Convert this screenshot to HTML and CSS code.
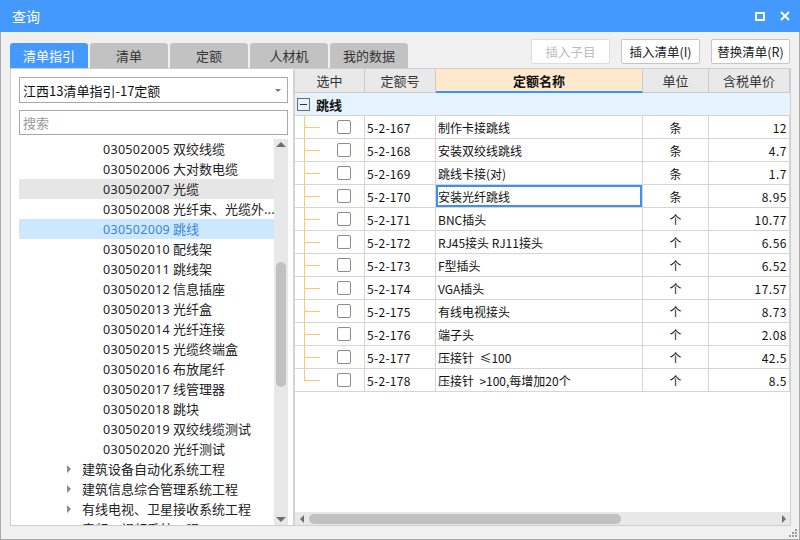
FILE: index.html
```html
<!DOCTYPE html>
<html lang="zh">
<head>
<meta charset="utf-8">
<title>查询</title>
<link rel="stylesheet" href="styles.css">
</head>
<body>
<div class="window">
  <header class="titlebar">
    <span class="title">查询</span>
    <span class="wctl">
      <svg class="ico-max" width="10" height="9" viewBox="0 0 10 9"><rect x="1" y="1" width="8" height="7" fill="none" stroke="#fff" stroke-width="2"/></svg>
      <svg class="ico-close" width="10" height="10" viewBox="0 0 10 10"><path d="M1 1L9 9M9 1L1 9" stroke="#fff" stroke-width="2"/></svg>
    </span>
  </header>
  <div class="content">
    <div class="toolbar">
      <nav class="tabs">
        <span class="tab active">清单指引</span>
        <span class="tab">清单</span>
        <span class="tab">定额</span>
        <span class="tab">人材机</span>
        <span class="tab">我的数据</span>
      </nav>
      <div class="btns">
        <button class="btn disabled">插入子目</button>
        <button class="btn">插入清单(I)</button>
        <button class="btn">替换清单(R)</button>
      </div>
    </div>
    <div class="main">
      <section class="left">
        <div class="select"><span>江西13清单指引-17定额</span><i class="caret"></i></div>
        <div class="search">搜索</div>
        <div class="treewrap">
          <ul class="tree">
            <li class="leaf"><span class="code">030502005</span>双绞线缆</li>
            <li class="leaf"><span class="code">030502006</span>大对数电缆</li>
            <li class="leaf hover"><span class="code">030502007</span>光缆</li>
            <li class="leaf"><span class="code">030502008</span>光纤束、光缆外...</li>
            <li class="leaf sel"><span class="code">030502009</span>跳线</li>
            <li class="leaf"><span class="code">030502010</span>配线架</li>
            <li class="leaf"><span class="code">030502011</span>跳线架</li>
            <li class="leaf"><span class="code">030502012</span>信息插座</li>
            <li class="leaf"><span class="code">030502013</span>光纤盒</li>
            <li class="leaf"><span class="code">030502014</span>光纤连接</li>
            <li class="leaf"><span class="code">030502015</span>光缆终端盒</li>
            <li class="leaf"><span class="code">030502016</span>布放尾纤</li>
            <li class="leaf"><span class="code">030502017</span>线管理器</li>
            <li class="leaf"><span class="code">030502018</span>跳块</li>
            <li class="leaf"><span class="code">030502019</span>双绞线缆测试</li>
            <li class="leaf"><span class="code">030502020</span>光纤测试</li>
            <li class="node"><i class="tri"></i>建筑设备自动化系统工程</li>
            <li class="node"><i class="tri"></i>建筑信息综合管理系统工程</li>
            <li class="node"><i class="tri"></i>有线电视、卫星接收系统工程</li>
            <li class="node"><i class="tri"></i>音频、视频系统工程</li>
          </ul>
          <div class="vscroll">
            <i class="arr-up"></i>
            <div class="vthumb"></div>
            <div class="vfill"></div>
            <i class="arr-down"></i>
          </div>
        </div>
      </section>
      <section class="right">
        <div class="grid">
          <div class="hc">选中</div>
          <div class="hc">定额号</div>
          <div class="hc hot">定额名称</div>
          <div class="hc">单位</div>
          <div class="hc">含税单价</div>

          <div class="group"><i class="minus"></i><b>跳线</b></div>

          <div class="c tree-c"><i class="chk"></i></div><div class="c code">5-2-167</div><div class="c name">制作卡接跳线</div><div class="c unit">条</div><div class="c price">12</div>
          <div class="c tree-c"><i class="chk"></i></div><div class="c code">5-2-168</div><div class="c name">安装双绞线跳线</div><div class="c unit">条</div><div class="c price">4.7</div>
          <div class="c tree-c"><i class="chk"></i></div><div class="c code">5-2-169</div><div class="c name">跳线卡接(对)</div><div class="c unit">条</div><div class="c price">1.7</div>
          <div class="c tree-c"><i class="chk"></i></div><div class="c code">5-2-170</div><div class="c name focus">安装光纤跳线</div><div class="c unit">条</div><div class="c price">8.95</div>
          <div class="c tree-c"><i class="chk"></i></div><div class="c code">5-2-171</div><div class="c name">BNC插头</div><div class="c unit">个</div><div class="c price">10.77</div>
          <div class="c tree-c"><i class="chk"></i></div><div class="c code">5-2-172</div><div class="c name">RJ45接头 RJ11接头</div><div class="c unit">个</div><div class="c price">6.56</div>
          <div class="c tree-c"><i class="chk"></i></div><div class="c code">5-2-173</div><div class="c name">F型插头</div><div class="c unit">个</div><div class="c price">6.52</div>
          <div class="c tree-c"><i class="chk"></i></div><div class="c code">5-2-174</div><div class="c name">VGA插头</div><div class="c unit">个</div><div class="c price">17.57</div>
          <div class="c tree-c"><i class="chk"></i></div><div class="c code">5-2-175</div><div class="c name">有线电视接头</div><div class="c unit">个</div><div class="c price">8.73</div>
          <div class="c tree-c"><i class="chk"></i></div><div class="c code">5-2-176</div><div class="c name">端子头</div><div class="c unit">个</div><div class="c price">2.08</div>
          <div class="c tree-c"><i class="chk"></i></div><div class="c code">5-2-177</div><div class="c name">压接针&nbsp; ≤100</div><div class="c unit">个</div><div class="c price">42.5</div>
          <div class="c tree-c last"><i class="chk"></i></div><div class="c code">5-2-178</div><div class="c name">压接针&nbsp; &gt;100,每增加20个</div><div class="c unit">个</div><div class="c price">8.5</div>
        </div>
        <div class="blank"></div>
        <div class="hscroll">
          <i class="arr-left"></i>
          <div class="hthumb"></div>
          <div class="hfill"></div>
          <i class="arr-right"></i>
        </div>
      </section>
    </div>
    <div class="statusbar">
      <svg class="grip" width="8" height="8" viewBox="0 0 8 8" fill="#9a9a9a"><rect x="6" y="0" width="2" height="2"/><rect x="3" y="3" width="2" height="2"/><rect x="6" y="3" width="2" height="2"/><rect x="0" y="6" width="2" height="2"/><rect x="3" y="6" width="2" height="2"/><rect x="6" y="6" width="2" height="2"/></svg>
    </div>
  </div>
</div>
</body>
</html>
```

FILE: styles.css
```css
* { box-sizing: border-box; margin: 0; padding: 0; }
html, body { width: 800px; height: 540px; overflow: hidden; }
body {
  font-family: "Noto Sans CJK SC", "Noto Sans", sans-serif;
  font-size: 13px;
  color: #222;
  background: #f0f0f0;
}
.window {
  width: 800px;
  height: 540px;
  display: flex;
  flex-direction: column;
  border: 1px solid #a8a8a8;
  border-top: none;
  background: #f0f0f0;
}
.titlebar {
  height: 32px;
  margin: 0 -1px;
  background: #4499ff;
  color: #fff;
  display: flex;
  align-items: center;
  justify-content: space-between;
  padding: 0 10px 0 12px;
}
.title { font-size: 14px; }
.wctl { display: flex; align-items: center; gap: 15px; }
.ico-max { margin-top: 1px; }

.content {
  flex: 1;
  display: flex;
  flex-direction: column;
  padding: 0 9px;
}
.toolbar {
  height: 36px;
  display: flex;
  justify-content: space-between;
}
.tabs { display: flex; gap: 2px; align-self: flex-end; }
.tab {
  width: 78px;
  height: 25px;
  background: #c2c2c2;
  color: #333;
  border-radius: 3px 3px 0 0;
  display: flex;
  align-items: center;
  justify-content: center;
  font-size: 13px;
}
.tab.active { background: #4499ff; color: #fff; }
.btns { display: flex; gap: 11px; padding-top: 7px; }
.btn {
  width: 79px;
  height: 25px;
  background: #fff;
  border: 1px solid #c6c6c6;
  border-radius: 2px;
  font-family: inherit;
  font-size: 12.5px;
  color: #222;
}
.btn.disabled { color: #bdbdbd; border-color: #dcdcdc; }

.main { height: 458px; display: flex; }
.left {
  width: 283px;
  background: #fff;
  border: 1px solid #cfcfcf;
  border-right: none;
  padding: 8px 5px 0 8px;
  display: flex;
  flex-direction: column;
}
.select {
  height: 26px;
  border: 1px solid #a9a9a9;
  display: flex;
  align-items: center;
  justify-content: space-between;
  padding: 0 6px 0 3px;
  color: #111;
}
.caret {
  width: 0; height: 0;
  border-left: 3px solid transparent;
  border-right: 3px solid transparent;
  border-top: 3px solid #777;
}
.search {
  height: 25px;
  margin-top: 7px;
  border: 1px solid #a9a9a9;
  padding-left: 3px;
  color: #9a9a9a;
  line-height: 23px;
}
.treewrap {
  flex: 1;
  margin-top: 4px;
  display: flex;
  overflow: hidden;
}
.tree { list-style: none; flex: 1; overflow: hidden; }
.tree li { height: 20px; line-height: 20px; white-space: nowrap; color: #222; }
.tree .leaf { padding-left: 82px; }
.tree .code { display: inline-block; width: 72px; font-family: "Noto Sans", sans-serif; font-size: 12.5px; }
.tree .hover { background: #e6e6e6; }
.tree .sel { background: #cce8ff; color: #3d86d6; }
.tree .node { padding-left: 48px; display: flex; align-items: center; }
.tri {
  width: 0; height: 0;
  border-top: 4px solid transparent;
  border-bottom: 4px solid transparent;
  border-left: 4px solid #8a8a8a;
  margin-right: 11px;
}
.vscroll {
  width: 14px;
  background: #e8e8e8;
  display: flex;
  flex-direction: column;
  align-items: center;
}
.arr-up, .arr-down { width: 0; height: 0; border-left: 5px solid transparent; border-right: 5px solid transparent; }
.arr-up { border-bottom: 5px solid #6f6f6f; margin-top: 3px; }
.arr-down { border-top: 5px solid #6f6f6f; margin-bottom: 3px; }
.vthumb { width: 10px; height: 125px; background: #c1c1c1; border-radius: 5px; margin-top: 115px; }
.vfill { flex: 1; }

.right {
  flex: 1;
  background: #fff;
  border: 1px solid #cfcfcf;
  border-left: 2px solid #d3d3d3;
  display: flex;
  flex-direction: column;
}
.grid {
  display: grid;
  grid-template-columns: 70px 71px 207px 66px 81px;
  grid-auto-rows: 23px;
  grid-template-rows: 24px;
}
.hc {
  background: #e9e9e9;
  border-right: 1px solid #cbcbcb;
  border-bottom: 1px solid #cbcbcb;
  display: flex;
  align-items: center;
  justify-content: center;
  color: #333;
}
.hc.hot {
  background: #ffe8cc;
  font-weight: bold;
  color: #111;
  border-bottom: 2px solid #3d94f6;
}
.group {
  grid-column: 1 / -1;
  background: #e5f3ff;
  border-bottom: 1px solid #d3d3d3;
  display: flex;
  align-items: center;
  padding-left: 2px;
}
.group b { margin-left: 6px; font-size: 13px; color: #111; }
.minus {
  width: 13px; height: 13px;
  border: 1px solid #6a6a6a;
  background: linear-gradient(#333, #333) center / 7px 1px no-repeat;
}
.c {
  border-right: 1px solid #d5d5d5;
  border-bottom: 1px solid #d5d5d5;
  display: flex;
  align-items: center;
  font-size: 12px;
  color: #111;
  white-space: nowrap;
  overflow: hidden;
}
.tree-c {
  padding-left: 42px;
  background:
    linear-gradient(#ffc673, #ffc673) 9px 0 / 1px 100% no-repeat,
    linear-gradient(#ffc673, #ffc673) 9px 11px / 16px 1px no-repeat;
}
.tree-c.last {
  background:
    linear-gradient(#ffc673, #ffc673) 9px 0 / 1px 12px no-repeat,
    linear-gradient(#ffc673, #ffc673) 9px 11px / 16px 1px no-repeat;
}
.chk {
  width: 14px; height: 14px;
  border: 1px solid #8c8c8c;
  border-radius: 2px;
  background: #fff;
}
.code { padding-left: 2px; letter-spacing: 0.3px; }
.name { padding-left: 2px; }
.name.focus { box-shadow: inset 0 0 0 2px #3d8ff2; }
.unit { justify-content: center; }
.price { justify-content: flex-end; padding-right: 2px; letter-spacing: 0.5px; }
.blank { flex: 1; }
.hscroll {
  height: 13px;
  background: #e8e8e8;
  display: flex;
  align-items: center;
  padding: 0 4px 0 5px;
}
.arr-left, .arr-right { width: 0; height: 0; border-top: 4px solid transparent; border-bottom: 4px solid transparent; }
.arr-left { border-right: 4px solid #6f6f6f; }
.arr-right { border-left: 4px solid #6f6f6f; }
.hthumb { width: 312px; height: 10px; background: #c1c1c1; border-radius: 5px; margin-left: 5px; }
.hfill { flex: 1; }
.statusbar { flex: 1; display: flex; justify-content: flex-end; align-items: flex-end; padding: 0 0 2px; margin-right: -7px; }
```
